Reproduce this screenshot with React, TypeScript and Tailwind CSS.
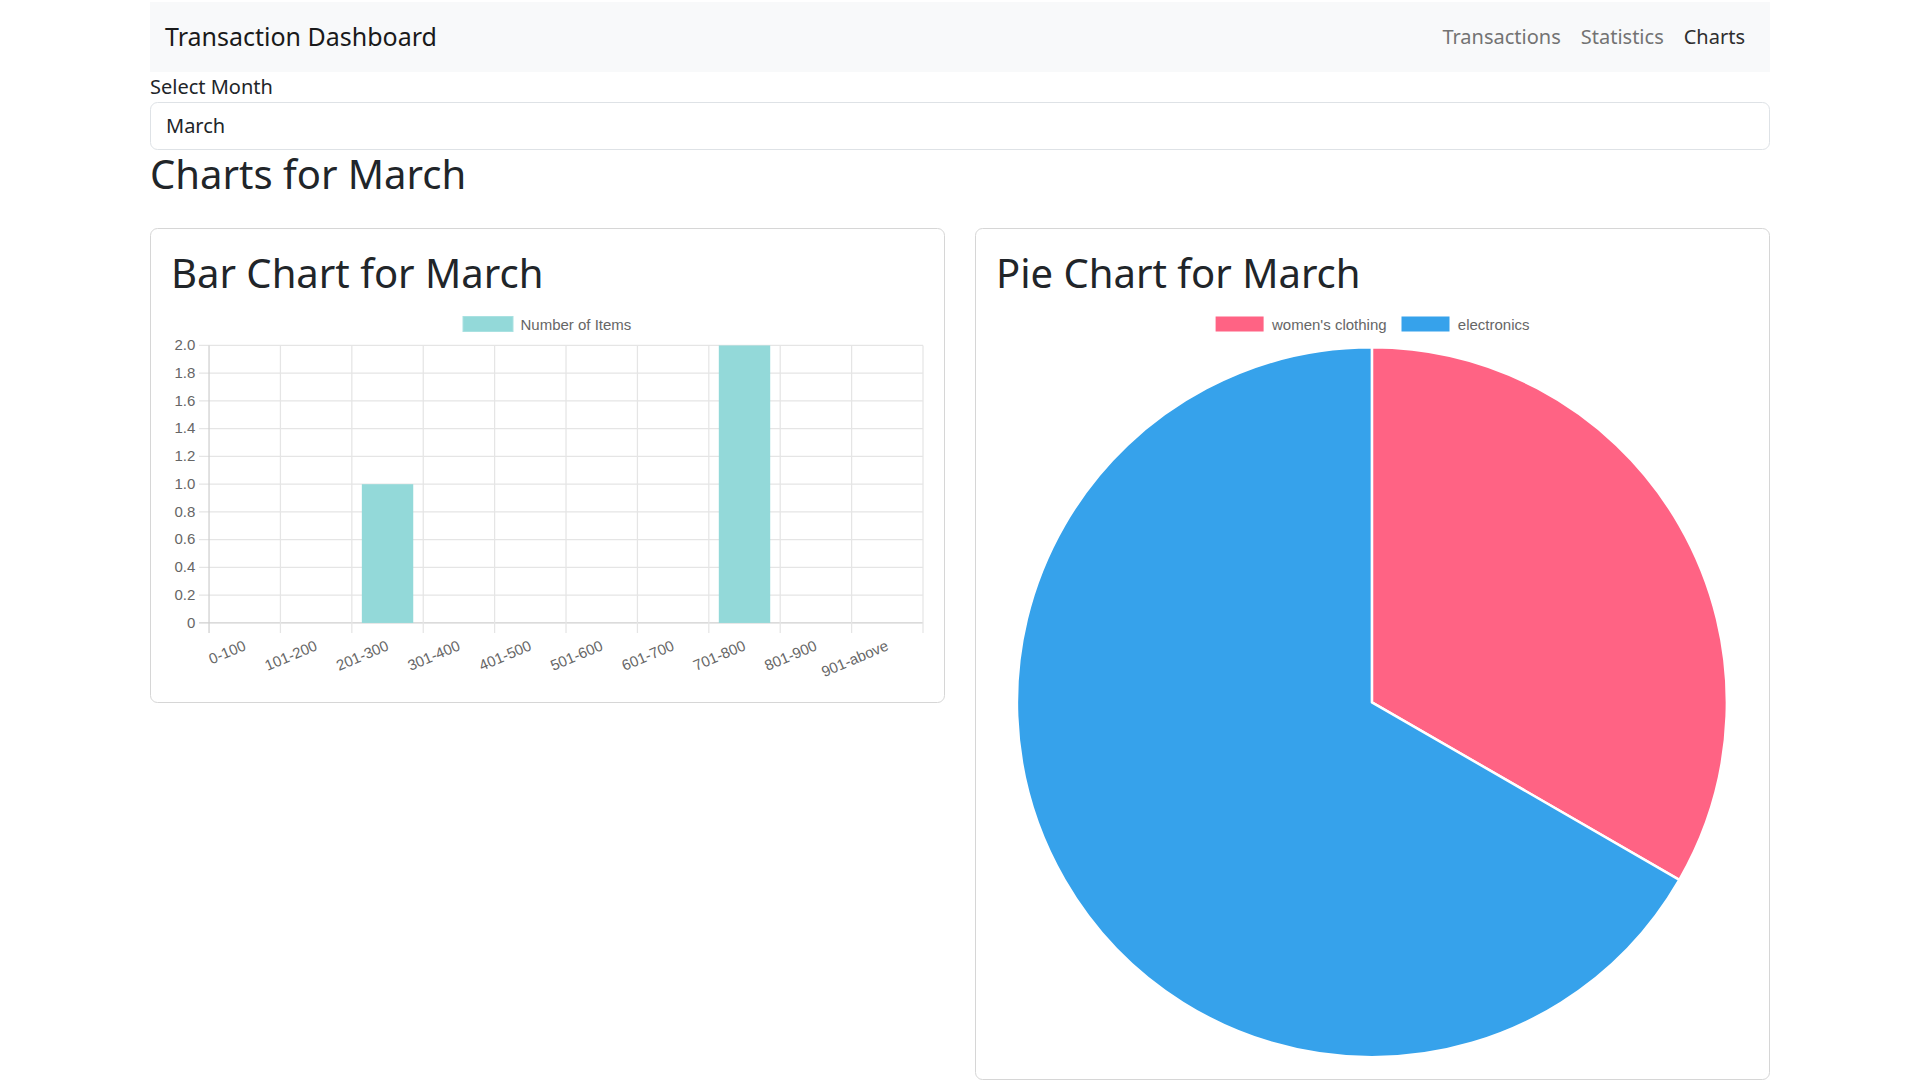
import React from "react";

const labels = ["0-100","101-200","201-300","301-400","401-500","501-600","601-700","701-800","801-900","901-above"];
const values = [0,0,1,0,0,0,0,2,0,0];

function BarChart() {
  const W = 752.5, H = 375;
  const L = 38.05, R = 752, T = 38.45, B = 315.95;
  const cw = (R - L) / 10;
  const yTicks = ["2.0","1.8","1.6","1.4","1.2","1.0","0.8","0.6","0.4","0.2","0"];
  return (
    <svg width={W} height={H} viewBox={`0 0 ${W} ${H}`} className="block font-['Liberation_Sans',Arial,sans-serif]">
      <rect x={292} y={9.5} width={50} height={15} fill="#93d9d9" stroke="#a9e1e1" strokeWidth={1} />
      <text x={349.5} y={17} fontSize={15} fill="#666" dominantBaseline="central">Number of Items</text>
      {yTicks.map((t, i) => {
        const y = T + (i * (B - T)) / 10;
        return (
          <g key={t}>
            <line x1={L - 10} x2={R} y1={y} y2={y} stroke={i === 10 ? "#cfcfcf" : "#e5e5e5"} strokeWidth={1.25} />
            <text x={24.3} y={y - 0.8} fontSize={15} fill="#666" textAnchor="end" dominantBaseline="central">{t}</text>
          </g>
        );
      })}
      {Array.from({ length: 11 }).map((_, i) => {
        const x = L + i * cw;
        return <line key={i} x1={x} x2={x} y1={T} y2={B + 10} stroke={i === 0 ? "#cfcfcf" : "#e5e5e5"} strokeWidth={1.25} />;
      })}
      {values.map((v, i) => {
        if (!v) return null;
        const bw = cw * 0.72;
        const x = L + (i + 0.5) * cw - bw / 2;
        const h = (v / 2) * (B - T);
        return <rect key={i} x={x} y={B - h} width={bw} height={h} fill="#93d9d9" />;
      })}
      {labels.map((l, i) => {
        const cx = L + (i + 0.5) * cw;
        const y = B + 21.5;
        return (
          <text key={l} x={cx} y={y} fontSize={15} fill="#666" textAnchor="end" dominantBaseline="central" transform={`rotate(-23 ${cx} ${y})`}>{l}</text>
        );
      })}
    </svg>
  );
}

function PieChart() {
  const W = 752.5, H = 752.5;
  const cx = 375.9, cy = 395.3, r = 355;
  const a = (30 * Math.PI) / 180;
  const ex = cx + r * Math.cos(a), ey = cy + r * Math.sin(a);
  return (
    <svg width={W} height={H} viewBox={`0 0 ${W} ${H}`} className="block font-['Liberation_Sans',Arial,sans-serif]">
      <rect x={219.6} y={9.5} width={48} height={15} fill="#ff6384" />
      <text x={276} y={17} fontSize={15} fill="#666" dominantBaseline="central">women's clothing</text>
      <rect x={405.5} y={9.5} width={48} height={15} fill="#36a2eb" />
      <text x={461.8} y={17} fontSize={15} fill="#666" dominantBaseline="central">electronics</text>
      <path d={`M ${cx} ${cy} L ${cx} ${cy - r} A ${r} ${r} 0 0 1 ${ex} ${ey} Z`} fill="#ff6384" stroke="#fff" strokeWidth={2.5} strokeLinejoin="round" />
      <path d={`M ${cx} ${cy} L ${ex} ${ey} A ${r} ${r} 0 1 1 ${cx} ${cy - r} Z`} fill="#36a2eb" stroke="#fff" strokeWidth={2.5} strokeLinejoin="round" />
    </svg>
  );
}

export default function App() {
  return (
    <div className="min-h-screen bg-white">
      <div className="w-[1620px] mx-auto font-['Noto_Sans',sans-serif] text-[#212529] text-[20px] leading-[30px]">
        <nav className="mt-[2px] h-[70px] bg-[#f8f9fa] flex items-center justify-between px-[15px]">
          <span className="text-[25px] leading-[37.5px] text-[#1a1a1a]">Transaction Dashboard</span>
          <div className="flex">
            <span className="px-[10px] text-[#737373]">Transactions</span>
            <span className="px-[10px] text-[#737373]">Statistics</span>
            <span className="px-[10px] text-[#2e2e2e]">Charts</span>
          </div>
        </nav>
        <div className="h-[30px]">Select Month</div>
        <div className="h-[47.5px] border-[1.25px] border-[#dee2e6] rounded-[7.5px] px-[15px] flex items-center">March</div>
        <h2 className="text-[40px] leading-[48px] font-normal">Charts for March</h2>
        <div className="grid grid-cols-2 gap-[30px] items-start mt-[30px]">
          <div className="border-[1.25px] border-[#d6d6d6] rounded-[7.5px] p-[20px]">
            <h3 className="text-[40px] leading-[48px] font-normal mb-[10px]">Bar Chart for March</h3>
            <BarChart />
          </div>
          <div className="border-[1.25px] border-[#d6d6d6] rounded-[7.5px] p-[20px]">
            <h3 className="text-[40px] leading-[48px] font-normal mb-[10px]">Pie Chart for March</h3>
            <PieChart />
          </div>
        </div>
      </div>
    </div>
  );
}
